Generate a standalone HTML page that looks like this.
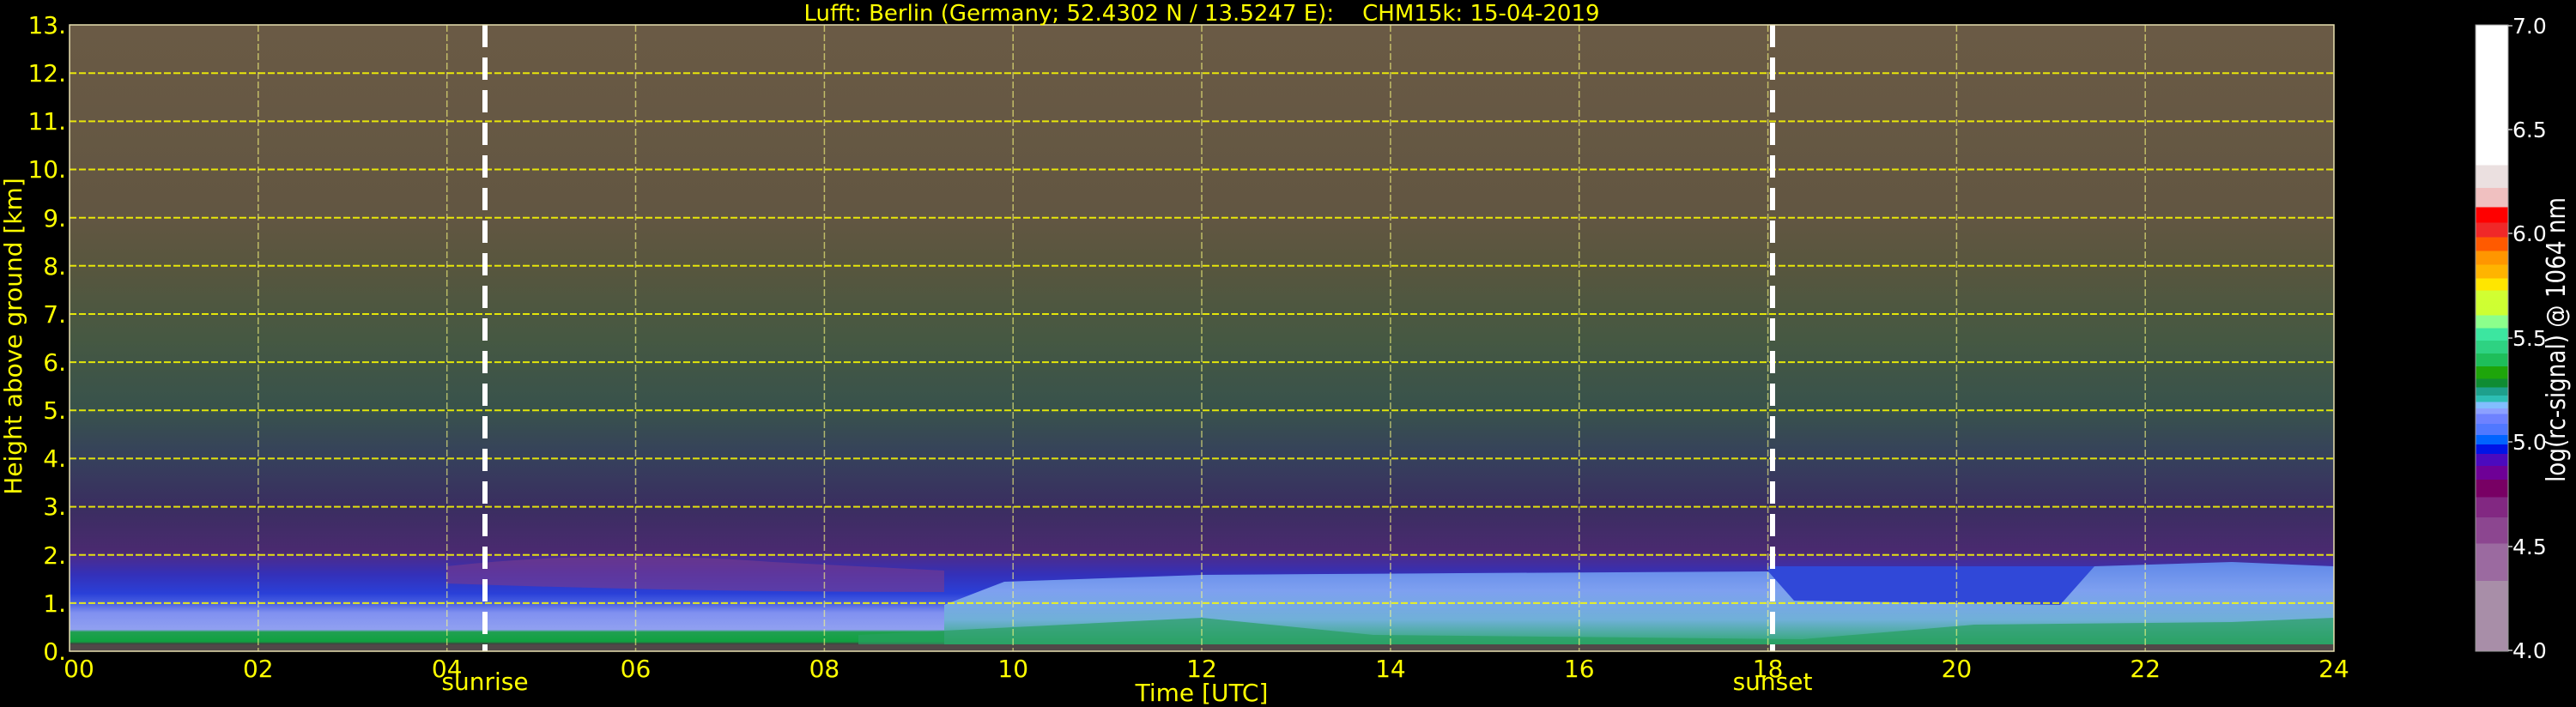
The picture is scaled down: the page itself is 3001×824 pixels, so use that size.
<!DOCTYPE html>
<html><head><meta charset="utf-8"><style>
html,body{margin:0;padding:0;background:#000;width:3001px;height:824px;overflow:hidden}
svg{display:block}
text{font-family:"DejaVu Sans","Liberation Sans",sans-serif}
</style></head><body>
<svg width="3001" height="824" viewBox="0 0 3001 824" xmlns="http://www.w3.org/2000/svg">
<defs>
<linearGradient id="base" x1="0" y1="0" x2="0" y2="1">
<stop offset="0" stop-color="#6a5a45"/>
<stop offset=".3077" stop-color="#625642"/>
<stop offset=".3846" stop-color="#58563e"/>
<stop offset=".5" stop-color="#465842"/>
<stop offset=".6154" stop-color="#38524c"/>
<stop offset=".6923" stop-color="#36405c"/>
<stop offset=".7692" stop-color="#3a2e60"/>
<stop offset=".8423" stop-color="#4a2a70"/>
<stop offset=".85" stop-color="#4a2c90"/>
<stop offset=".8769" stop-color="#3430b8"/>
<stop offset=".9077" stop-color="#2a40d8"/>
<stop offset=".9231" stop-color="#4860e0"/>
<stop offset=".9385" stop-color="#8090f0"/>
<stop offset=".9654" stop-color="#90a0f0"/>
<stop offset=".9692" stop-color="#20a050"/>
<stop offset=".9846" stop-color="#10a040"/>
<stop offset=".9885" stop-color="#404040"/>
<stop offset="1" stop-color="#504848"/>
</linearGradient>
<linearGradient id="day" x1="0" y1="0" x2="0" y2="1">
<stop offset="0" stop-color="#6088e8"/>
<stop offset=".35" stop-color="#7ea0f0"/>
<stop offset=".7" stop-color="#70b0d8"/>
<stop offset="1" stop-color="#30a870"/>
</linearGradient>
<linearGradient id="cb" x1="0" y1="0" x2="0" y2="1">
<stop offset="0" stop-color="#fff"/><stop offset=".224" stop-color="#fff"/>
<stop offset=".224" stop-color="#ebe0e0"/><stop offset=".26" stop-color="#ebe0e0"/>
<stop offset=".26" stop-color="#f0c0c0"/><stop offset=".291" stop-color="#f0c0c0"/>
<stop offset=".291" stop-color="#ff0000"/><stop offset=".316" stop-color="#ff0000"/>
<stop offset=".316" stop-color="#f02828"/><stop offset=".339" stop-color="#f02828"/>
<stop offset=".339" stop-color="#ff5a00"/><stop offset=".361" stop-color="#ff5a00"/>
<stop offset=".361" stop-color="#ff9600"/><stop offset=".383" stop-color="#ff9600"/>
<stop offset=".383" stop-color="#ffb400"/><stop offset=".405" stop-color="#ffb400"/>
<stop offset=".405" stop-color="#ffe600"/><stop offset=".424" stop-color="#ffe600"/>
<stop offset=".424" stop-color="#d2ff32"/><stop offset=".464" stop-color="#ccff33"/>
<stop offset=".464" stop-color="#8cff8c"/><stop offset=".484" stop-color="#8cff8c"/>
<stop offset=".484" stop-color="#3ce6a0"/><stop offset=".504" stop-color="#3ce6a0"/>
<stop offset=".504" stop-color="#2ed282"/><stop offset=".525" stop-color="#2ed282"/>
<stop offset=".525" stop-color="#1ebe5a"/><stop offset=".545" stop-color="#1ebe5a"/>
<stop offset=".545" stop-color="#1ea50a"/><stop offset=".565" stop-color="#1ea50a"/>
<stop offset=".565" stop-color="#0f8c32"/><stop offset=".579" stop-color="#0f8c32"/>
<stop offset=".579" stop-color="#1ea08c"/><stop offset=".592" stop-color="#1ea08c"/>
<stop offset=".592" stop-color="#2dbeb4"/><stop offset=".602" stop-color="#2dbeb4"/>
<stop offset=".602" stop-color="#82beff"/><stop offset=".612" stop-color="#82beff"/>
<stop offset=".612" stop-color="#8ca0ff"/><stop offset=".621" stop-color="#8ca0ff"/>
<stop offset=".621" stop-color="#6e82ff"/><stop offset=".637" stop-color="#6e82ff"/>
<stop offset=".637" stop-color="#5078ff"/><stop offset=".655" stop-color="#5078ff"/>
<stop offset=".655" stop-color="#0064ff"/><stop offset=".67" stop-color="#0064ff"/>
<stop offset=".67" stop-color="#0014e6"/><stop offset=".685" stop-color="#0014e6"/>
<stop offset=".685" stop-color="#4b0abe"/><stop offset=".704" stop-color="#4b0abe"/>
<stop offset=".704" stop-color="#6e0096"/><stop offset=".726" stop-color="#6e0096"/>
<stop offset=".726" stop-color="#780064"/><stop offset=".754" stop-color="#780064"/>
<stop offset=".754" stop-color="#822882"/><stop offset=".786" stop-color="#822882"/>
<stop offset=".786" stop-color="#8c4690"/><stop offset=".828" stop-color="#8c4690"/>
<stop offset=".828" stop-color="#9b6aa0"/><stop offset=".888" stop-color="#9b6aa0"/>
<stop offset=".888" stop-color="#a88ea8"/><stop offset="1" stop-color="#a88ea8"/>
</linearGradient>
</defs>

<rect x="81" y="29" width="2638" height="730" fill="url(#base)"/>
<path d="M520 660 Q700 640 900 655 L1100 665 L1100 690 Q800 690 520 680 Z" fill="#7a3c8c" opacity=".6"/>
<rect x="2060" y="660" width="380" height="60" fill="#3048d8"/>
<path d="M1100 751 L1100 705 L1170 678 L1400 670 L1700 668 L2060 666 L2090 700 L2400 705 L2440 660 L2600 655 L2719 660 L2719 751 Z" fill="url(#day)"/>
<path d="M1000 751 L1000 740 L1100 735 L1400 720 L1600 740 L2100 745 L2300 728 L2600 725 L2719 720 L2719 751 Z" fill="#28a060" opacity=".7"/>
<rect x="81" y="751" width="2638" height="8" fill="#504848"/>

<g stroke="#ffff00" stroke-width="2" stroke-dasharray="8 3" opacity=".85">
<line x1="81" x2="2719" y1="85.2" y2="85.2"/><line x1="81" x2="2719" y1="141.4" y2="141.4"/>
<line x1="81" x2="2719" y1="197.5" y2="197.5"/><line x1="81" x2="2719" y1="253.7" y2="253.7"/>
<line x1="81" x2="2719" y1="309.8" y2="309.8"/><line x1="81" x2="2719" y1="366" y2="366"/>
<line x1="81" x2="2719" y1="422.1" y2="422.1"/><line x1="81" x2="2719" y1="478.3" y2="478.3"/>
<line x1="81" x2="2719" y1="534.4" y2="534.4"/><line x1="81" x2="2719" y1="590.6" y2="590.6"/>
<line x1="81" x2="2719" y1="646.7" y2="646.7"/><line x1="81" x2="2719" y1="702.9" y2="702.9"/>
</g>
<g stroke="#ffff80" stroke-width="1.5" stroke-dasharray="8 3" opacity=".6">
<line y1="29" y2="759" x1="300.8" x2="300.8"/><line y1="29" y2="759" x1="520.7" x2="520.7"/>
<line y1="29" y2="759" x1="740.5" x2="740.5"/><line y1="29" y2="759" x1="960.4" x2="960.4"/>
<line y1="29" y2="759" x1="1180.2" x2="1180.2"/><line y1="29" y2="759" x1="1400" x2="1400"/>
<line y1="29" y2="759" x1="1619.9" x2="1619.9"/><line y1="29" y2="759" x1="1839.7" x2="1839.7"/>
<line y1="29" y2="759" x1="2059.6" x2="2059.6"/><line y1="29" y2="759" x1="2279.4" x2="2279.4"/>
<line y1="29" y2="759" x1="2499.2" x2="2499.2"/>
</g>
<g stroke="#fff" stroke-width="6" stroke-dasharray="26 12">
<line x1="565" x2="565" y1="29" y2="759"/>
<line x1="2065" x2="2065" y1="29" y2="759"/>
</g>
<rect x="81" y="29" width="2638" height="730" fill="none" stroke="#e8e0b0" stroke-width="1.5"/>

<text x="1400" y="24" fill="#ffff00" font-size="26" text-anchor="middle" xml:space="preserve">Lufft: Berlin (Germany; 52.4302 N / 13.5247 E):    CHM15k: 15-04-2019</text>

<g fill="#ffff00" font-size="28" text-anchor="end">
<text x="77" y="39">13.</text><text x="77" y="95">12.</text><text x="77" y="151">11.</text>
<text x="77" y="207">10.</text><text x="77" y="264">9.</text><text x="77" y="320">8.</text>
<text x="77" y="376">7.</text><text x="77" y="432">6.</text><text x="77" y="488">5.</text>
<text x="77" y="544">4.</text><text x="77" y="600">3.</text><text x="77" y="657">2.</text>
<text x="77" y="713">1.</text><text x="77" y="769">0.</text>
</g>
<text transform="translate(25 392) rotate(-90)" fill="#ffff00" font-size="28" text-anchor="middle">Height above ground [km]</text>

<g fill="#ffff00" font-size="28" text-anchor="middle">
<text x="92" y="789">00</text><text x="300.8" y="789">02</text><text x="520.7" y="789">04</text>
<text x="740.5" y="789">06</text><text x="960.4" y="789">08</text><text x="1180.2" y="789">10</text>
<text x="1400" y="789">12</text><text x="1619.9" y="789">14</text><text x="1839.7" y="789">16</text>
<text x="2059.6" y="789">18</text><text x="2279.4" y="789">20</text><text x="2499.2" y="789">22</text>
<text x="2719" y="789">24</text>
<text x="565" y="804">sunrise</text><text x="2065" y="804">sunset</text>
<text x="1400" y="817">Time [UTC]</text>
</g>

<rect x="2884" y="29" width="38" height="730" fill="url(#cb)"/>
<rect x="2884" y="29" width="38" height="730" fill="none" stroke="#999" stroke-width="1"/>
<g stroke="#ccc" stroke-width="1.5">
<line x1="2922" x2="2927" y1="30" y2="30"/><line x1="2922" x2="2927" y1="151" y2="151"/>
<line x1="2922" x2="2927" y1="272" y2="272"/><line x1="2922" x2="2927" y1="394" y2="394"/>
<line x1="2922" x2="2927" y1="515" y2="515"/><line x1="2922" x2="2927" y1="637" y2="637"/>
<line x1="2922" x2="2927" y1="758" y2="758"/>
</g>
<g fill="#fff" font-size="25">
<text x="2927" y="39">7.0</text><text x="2927" y="160">6.5</text><text x="2927" y="281">6.0</text>
<text x="2927" y="403">5.5</text><text x="2927" y="524">5.0</text><text x="2927" y="646">4.5</text>
<text x="2927" y="767">4.0</text>
</g>
<text transform="translate(2988 396) rotate(-90)" fill="#fff" font-size="30" text-anchor="middle" textLength="332" lengthAdjust="spacingAndGlyphs">log(rc-signal) @ 1064 nm</text>
</svg>
</body></html>
